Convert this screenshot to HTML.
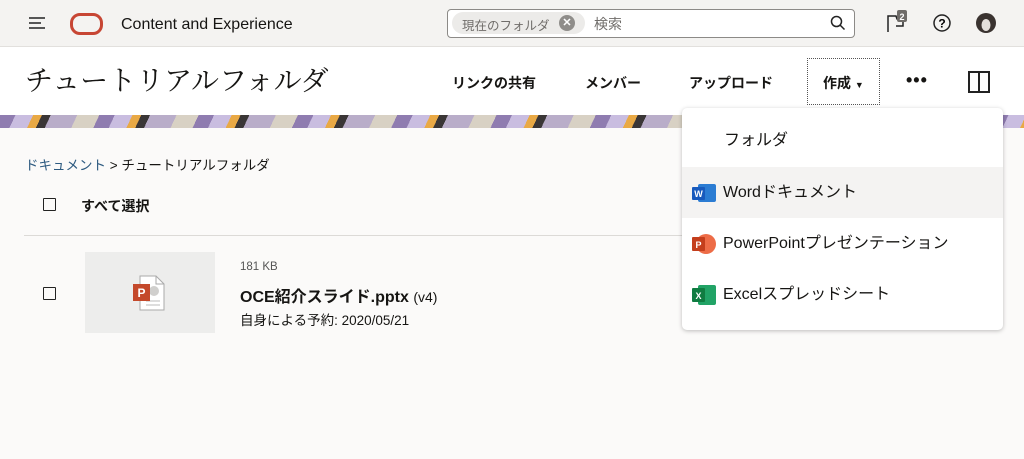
<!DOCTYPE html>
<html><head><meta charset="utf-8"><style>
body{margin:0;width:1024px;height:459px;overflow:hidden;background:#fbfaf9;font-family:"Liberation Sans","Noto Sans CJK JP",sans-serif;color:#161513;position:relative}
.a{position:absolute}
.top{left:0;top:0;width:1024px;height:46px;background:#f4f3f1;border-bottom:1px solid #e2e0dd}
.hdr{left:0;top:47px;width:1024px;height:68px;background:#fff}
.banner{left:0;top:115px;width:1024px;height:13px;background:repeating-linear-gradient(115deg,#8f7cb0 0 14px,#c9bde0 14px 30px,#e9a945 30px 38px,#3a3636 38px 46px,#b9adc9 46px 70px,#d8d1c4 70px 90px)}
.nav{font-size:14px;font-weight:bold;top:73px}
.menu{left:682px;top:108px;width:321px;height:222px;background:#fff;border-radius:5px;box-shadow:0 1px 4px rgba(0,0,0,.25)}
.mi{position:absolute;left:0;width:321px;height:51px;font-size:16px;line-height:51px}
.cb{width:11px;height:11px;border:1.5px solid #222;border-radius:1px}
.ico{position:absolute;left:10px;width:24px;height:20px}
</style></head><body>
<div class="a top"></div>
<svg class="a" style="left:28px;top:15px" width="20" height="16"><path d="M1 3h16M1 8h12M1 13h16" stroke="#222" stroke-width="1.6"/></svg>
<div class="a" style="left:70px;top:13px;width:27px;height:16px;border:3.5px solid #c74634;border-radius:10px"></div>
<div class="a" style="left:121px;top:16px;font-size:16px">Content and Experience</div>
<div class="a" style="left:447px;top:9px;width:406px;height:27px;border:1px solid #8c8a87;border-radius:4px;background:#fff"></div>
<div class="a" style="left:452px;top:12px;width:133px;height:22px;background:#ecebe9;border-radius:11px"></div>
<div class="a" style="left:462px;top:15px;font-size:12.5px;color:#6f6c69">現在のフォルダ</div>
<div class="a" style="left:559px;top:15px;width:16px;height:16px;border-radius:50%;background:#8f8d8a;color:#fff;font-size:11px;text-align:center;line-height:16px;font-weight:bold">✕</div>
<div class="a" style="left:594px;top:14px;font-size:14px;color:#6f6c69">検索</div>
<svg class="a" style="left:830px;top:15px" width="16" height="16"><circle cx="6.5" cy="6.5" r="5" fill="none" stroke="#222" stroke-width="1.5"/><path d="M10 10l4.5 4.5" stroke="#222" stroke-width="1.5"/></svg>
<svg class="a" style="left:885px;top:10px" width="24" height="24"><path d="M3 22V6h8l1 3h6v7h-7" fill="none" stroke="#222" stroke-width="1.5"/><rect x="12" y="0" width="10" height="12" rx="2" fill="#6f6c69"/><text x="17" y="10" font-size="9" fill="#fff" text-anchor="middle" font-family="Liberation Sans" font-weight="bold">2</text></svg>
<svg class="a" style="left:932px;top:13px" width="20" height="20"><circle cx="10" cy="10" r="8" fill="none" stroke="#222" stroke-width="1.5"/><text x="10" y="14.5" font-size="12" text-anchor="middle" font-family="Liberation Sans" font-weight="bold">?</text></svg>
<svg class="a" style="left:976px;top:13px" width="20" height="20"><circle cx="10" cy="10" r="10" fill="#3a3330"/><ellipse cx="10" cy="12" rx="4.5" ry="6" fill="#e4e0dc"/></svg>
<div class="a hdr"></div>
<div class="a" style="left:25px;top:59px;font-size:28px;font-family:'Noto Serif CJK SC','Liberation Serif',serif">チュートリアルフォルダ</div>
<div class="a nav" style="left:452px">リンクの共有</div>
<div class="a nav" style="left:585px">メンバー</div>
<div class="a nav" style="left:689px">アップロード</div>
<div class="a" style="left:807px;top:58px;width:71px;height:45px;border:1px dotted #555"></div>
<div class="a nav" style="left:823px">作成 <span style="font-size:9px">▼</span></div>
<div class="a" style="left:906px;top:70px;font-size:18px;font-weight:bold;letter-spacing:1px">•••</div>
<div class="a" style="left:968px;top:71px;width:18px;height:18px;border:2px solid #222"></div>
<div class="a" style="left:978px;top:71px;width:2px;height:22px;background:#222"></div>
<div class="a banner"></div>
<div class="a" style="left:25px;top:154px;font-size:13.5px"><span style="color:#2d5a80">ドキュメント</span> &gt; チュートリアルフォルダ</div>
<div class="a cb" style="left:43px;top:198px"></div>
<div class="a" style="left:81px;top:196px;font-size:14px;font-weight:bold">すべて選択</div>
<div class="a" style="left:24px;top:235px;width:680px;height:1px;background:#dcdad7"></div>
<div class="a cb" style="left:43px;top:287px"></div>
<div class="a" style="left:85px;top:252px;width:130px;height:81px;background:#ededec"></div>
<svg class="a" style="left:132px;top:274px" width="36" height="38"><path d="M8 2h16l8 8v26H8z" fill="#fff" stroke="#aaa"/><path d="M24 2v8h8" fill="none" stroke="#aaa"/><circle cx="22" cy="17" r="5" fill="#d0cfcd"/><path d="M14 27h14M14 31h14" stroke="#bbb"/><rect x="1" y="10" width="17" height="17" fill="#c4492b"/><text x="9.5" y="23" font-size="12" fill="#fff" text-anchor="middle" font-weight="bold" font-family="Liberation Sans">P</text></svg>
<div class="a" style="left:240px;top:261px;font-size:11.5px;color:#555">181 KB</div>
<div class="a" style="left:240px;top:283px;font-size:16px;font-weight:bold">OCE紹介スライド.pptx <span style="font-weight:normal;font-size:14px">(v4)</span></div>
<div class="a" style="left:240px;top:309px;font-size:13.5px">自身による予約: 2020/05/21</div>
<div class="a menu">
<div class="mi" style="top:7px;padding-left:42px;box-sizing:border-box">フォルダ</div>
<div class="mi" style="top:59px;background:#f4f3f2;padding-left:41px;box-sizing:border-box"><svg class="ico" style="top:16px"><rect x="6" y="1" width="18" height="18" rx="2" fill="#2b7cd3"/><rect x="0" y="4" width="13" height="13" rx="1" fill="#185abd"/><text x="6.5" y="14" font-size="9" fill="#fff" text-anchor="middle" font-weight="bold" font-family="Liberation Sans">W</text></svg>Wordドキュメント</div>
<div class="mi" style="top:110px;padding-left:41px;box-sizing:border-box"><svg class="ico" style="top:16px"><circle cx="14" cy="10" r="10" fill="#ed6c47"/><rect x="0" y="3" width="13" height="14" rx="1" fill="#c43e1c"/><text x="6.5" y="14" font-size="9" fill="#fff" text-anchor="middle" font-weight="bold" font-family="Liberation Sans">P</text></svg>PowerPointプレゼンテーション</div>
<div class="mi" style="top:161px;padding-left:41px;box-sizing:border-box"><svg class="ico" style="top:16px"><rect x="6" y="0" width="18" height="20" rx="2" fill="#21a366"/><rect x="0" y="3" width="13" height="14" rx="1" fill="#107c41"/><text x="6.5" y="14" font-size="9" fill="#fff" text-anchor="middle" font-weight="bold" font-family="Liberation Sans">X</text></svg>Excelスプレッドシート</div>
</div>
</body></html>
